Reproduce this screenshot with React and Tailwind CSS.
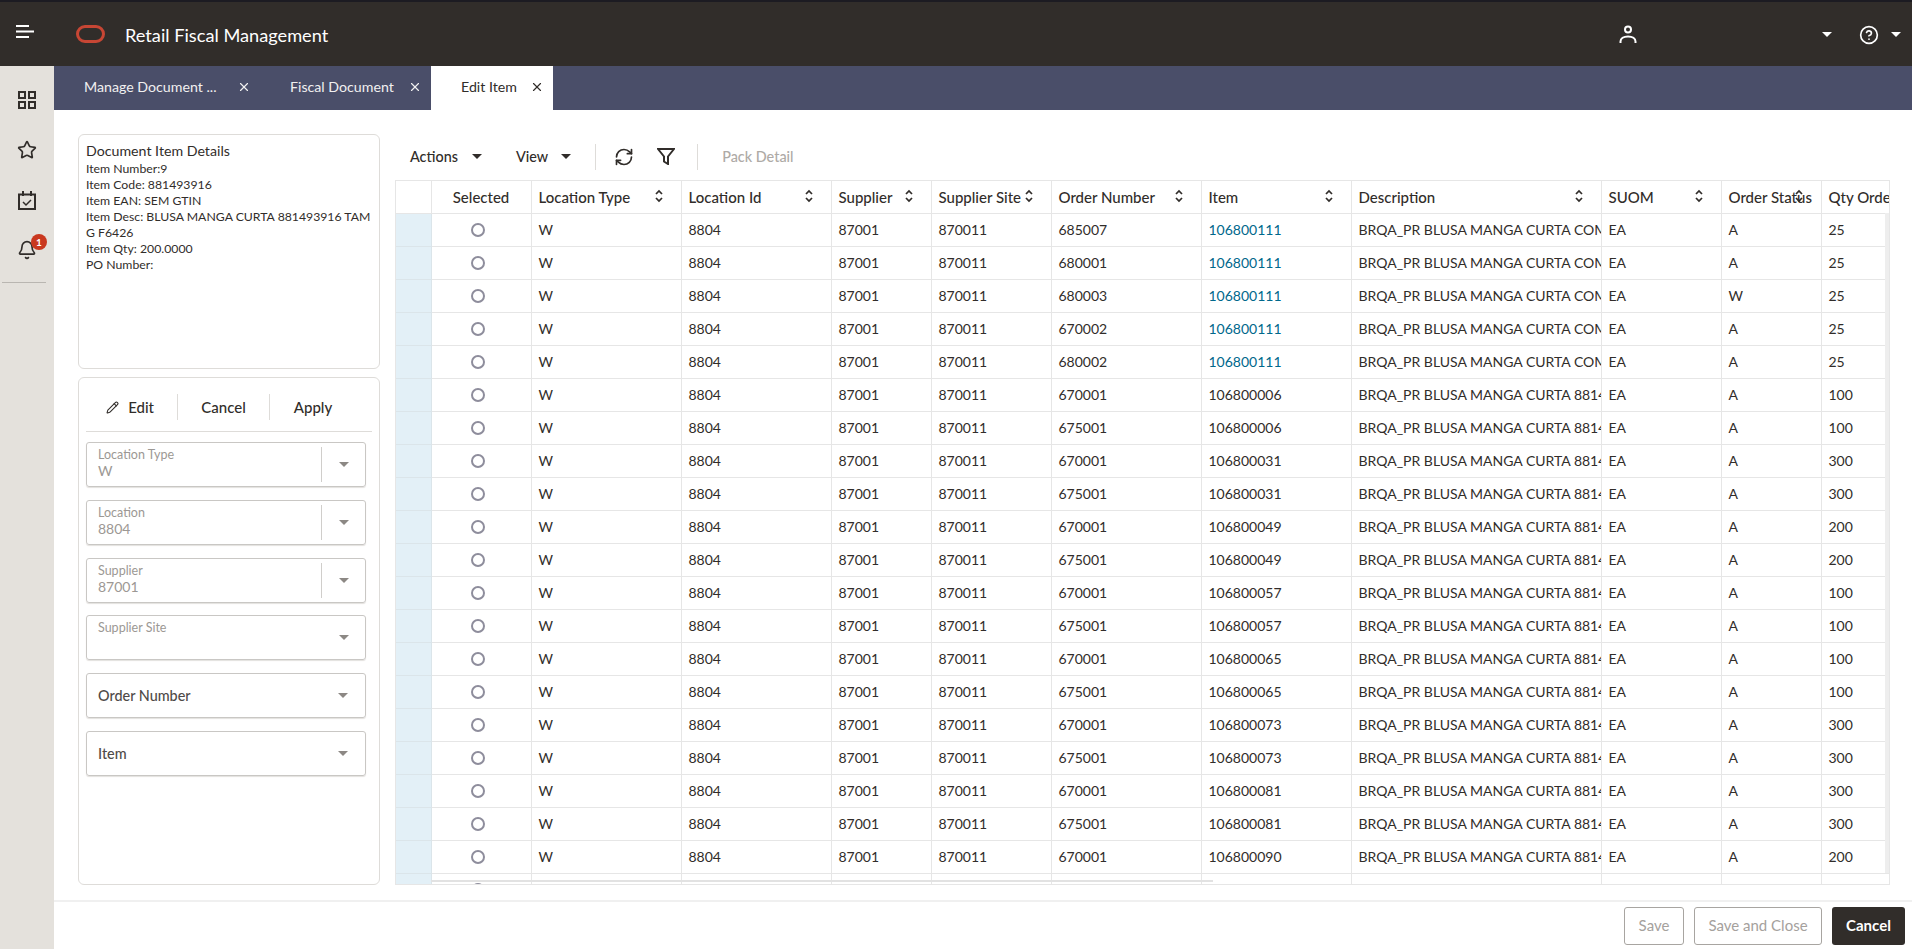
import { Pencil, X, Star, Bell, CircleHelp, RefreshCw } from 'lucide-react'

const orders = ['685007', '680001', '680003', '670002', '680002']
const items = ['106800006', '106800031', '106800049', '106800057', '106800065', '106800073', '106800081']
const itemQty = [100, 300, 200, 100, 100, 300, 300]

const rows = []
orders.forEach((order, i) => {
  rows.push({ order, item: '106800111', link: true, desc: 'BRQA_PR BLUSA MANGA CURTA COM 881493916', status: i === 2 ? 'W' : 'A', qty: 25 })
})
items.forEach((item, i) => {
  const desc = 'BRQA_PR BLUSA MANGA CURTA 881493916 TAM G'
  rows.push({ order: '670001', item, desc, status: 'A', qty: itemQty[i] })
  rows.push({ order: '675001', item, desc, status: 'A', qty: itemQty[i] })
})
rows.push({ order: '670001', item: '106800090', desc: 'BRQA_PR BLUSA MANGA CURTA 881493916 TAM G', status: 'A', qty: 200 })
rows.push({ order: '', item: '', desc: '', status: '', qty: '' })

const columns = [
  { label: 'Location Type', width: 'w-[150px]' },
  { label: 'Location Id', width: 'w-[150px]' },
  { label: 'Supplier', width: 'w-[100px]' },
  { label: 'Supplier Site', width: 'w-[120px]' },
  { label: 'Order Number', width: 'w-[150px]' },
  { label: 'Item', width: 'w-[150px]' },
  { label: 'Description', width: 'w-[250px]' },
  { label: 'SUOM', width: 'w-[120px]' },
  { label: 'Order Status', width: 'w-[100px]' },
]

function Caret({ color = 'border-t-[#312d2a]' }) {
  return <span className={`inline-block w-0 h-0 border-x-[5px] border-x-transparent border-t-[5px] ${color}`} />
}

function SortIcon() {
  return (
    <svg className="absolute right-[17px] top-[8px]" width="10" height="14" viewBox="0 0 10 14" fill="none" stroke="#312d2a" strokeWidth="1.75">
      <path d="M2 5l3-3 3 3M2 9l3 3 3-3" />
    </svg>
  )
}

function GridIcon() {
  return (
    <svg width="18" height="18" viewBox="0 0 18 18" fill="none" stroke="#312d2a" strokeWidth="2">
      <rect x="1" y="1" width="6" height="6" />
      <rect x="11" y="1" width="6" height="6" />
      <rect x="1" y="11" width="6" height="6" />
      <rect x="11" y="11" width="6" height="6" />
    </svg>
  )
}

function CalendarIcon() {
  return (
    <svg width="18" height="19" viewBox="0 0 18 19" fill="none" stroke="#312d2a" strokeWidth="2">
      <path d="M1 3.5h16v14.5h-16zM5 0v5M13 0v5" />
      <path d="M5 11l3 3 5-5" strokeWidth="1.5" />
    </svg>
  )
}

function UserIcon() {
  return (
    <svg width="18" height="20" viewBox="0 0 18 20" fill="none" stroke="white" strokeWidth="2">
      <circle cx="9" cy="4.5" r="3" />
      <path d="M1.5 18v-1.5c0-3 3-5 7.500-5s7.500 2 7.500 5v1.500" />
    </svg>
  )
}

function FunnelIcon() {
  return (
    <svg width="18" height="17" viewBox="0 0 18 17" fill="none" stroke="#312d2a" strokeWidth="2">
      <path d="M1 1h16l-6 7.500v7.500l-4-2.500v-5z" />
    </svg>
  )
}

function Field({ label, value, divider, muted = true }) {
  if (!muted) {
    return (
      <div className="h-[45px] rounded-[3px] border border-[#c9c7c4] shadow-[0_1px_1px_#e3e1de] flex items-center pl-[11px] pr-[17px] justify-between">
        <span className="text-[14.4px] text-[#4f4b48] font-medium">{label}</span>
        <Caret color="border-t-[#8c8884]" />
      </div>
    )
  }
  return (
    <div className="h-[45px] rounded-[3px] border border-[#c9c7c4] shadow-[0_1px_1px_#e3e1de] flex items-center pl-[11px]">
      <div className="flex-1 flex flex-col self-start pt-[4px]">
        <span className="text-[12.5px] leading-[16px] text-[#9c9894]">{label}</span>
        <span className="text-[14px] leading-[15px] text-[#9c9894]">{value}</span>
      </div>
      {divider && <div className="w-px h-[35px] bg-[#d0cecb]" />}
      <div className="w-[43px] flex justify-center">
        <Caret color="border-t-[#8c8884]" />
      </div>
    </div>
  )
}

function Tab({ label, active, width, pad }) {
  return (
    <div className={`h-full flex items-center pb-[3px] ${width} ${pad} ${active ? 'bg-white text-[#312d2a]' : 'text-[#f1f0f0]'}`}>
      <span className="text-[14.2px] whitespace-nowrap">{label}</span>
      <X className="ml-auto" size={14} strokeWidth={2} />
    </div>
  )
}

export default function App() {
  return (
    <div className="h-[949px] w-[1912px] overflow-hidden flex flex-col bg-white text-[#312d2a] font-['Lato','Noto_Sans',sans-serif]">
      <header className="h-[66px] shrink-0 bg-[#312d2a] border-t-2 border-[#1c1b22] flex items-center text-white">
        <svg className="ml-[16px] -mt-[6px]" width="18" height="13" viewBox="0 0 18 13" fill="white">
          <rect x="0" y="0" width="13" height="2" />
          <rect x="0" y="5.500" width="18" height="2" />
          <rect x="0" y="11" width="13" height="2" />
        </svg>
        <span className="ml-[42px] w-[29px] h-[18px] rounded-[9px] border-[3px] border-[#c74634]" />
        <span className="ml-[20px] text-[18.2px] pt-[3px]">Retail Fiscal Management</span>
        <div className="ml-auto flex items-center pt-[1px]">
          <UserIcon />
          <span className="ml-[185px] flex"><Caret color="border-t-white" /></span>
          <CircleHelp className="ml-[27px]" size={20} strokeWidth={2} />
          <span className="ml-[12px] mr-[11px] flex"><Caret color="border-t-white" /></span>
        </div>
      </header>

      <div className="flex-1 flex min-h-0">
        <aside className="w-[54px] shrink-0 bg-[#e4e1dc] flex flex-col items-center pt-[9px]">
          <div className="h-[50px] flex items-center"><GridIcon /></div>
          <div className="h-[50px] flex items-center"><Star size={20} strokeWidth={2} /></div>
          <div className="h-[50px] flex items-center"><CalendarIcon /></div>
          <div className="h-[50px] flex items-center">
            <div className="relative">
              <Bell size={20} strokeWidth={2} />
              <span className="absolute -top-[6px] left-[14px] w-[16px] h-[16px] rounded-full bg-[#c9381f] text-white text-[10px] font-bold flex items-center justify-center">1</span>
            </div>
          </div>
          <div className="mt-[7px] self-start ml-[2px] w-[44px] h-px bg-[#b9b6b1]" />
        </aside>

        <div className="flex-1 min-w-0 flex flex-col">
          <nav className="h-[44px] shrink-0 bg-[#4a4e69] flex items-center">
            <Tab label="Manage Document ..." width="w-[206px]" pad="pl-[30px] pr-[9px]" />
            <Tab label="Fiscal Document" width="w-[171px]" pad="pl-[30px] pr-[9px]" />
            <Tab label="Edit Item" active width="w-[122px]" pad="pl-[30px] pr-[9px]" />
          </nav>

          <main className="flex-1 min-h-0 flex pl-[24px] pr-[22px] pt-[24px] gap-[15px]">
            <div className="w-[302px] shrink-0 flex flex-col gap-[8px] h-[751px]">
              <section className="h-[235px] shrink-0 rounded-[6px] border border-[#dedcd9] px-[7px] pt-[6px]">
                <h2 className="text-[14.2px] leading-[20px]">Document Item Details</h2>
                <div className="text-[12.25px] leading-[16px] break-all">
                  <p>Item Number:9</p>
                  <p>Item Code: 881493916</p>
                  <p>Item EAN: SEM GTIN</p>
                  <p>Item Desc: BLUSA MANGA CURTA 881493916 TAM G F6426</p>
                  <p>Item Qty: 200.0000</p>
                  <p>PO Number:</p>
                </div>
              </section>

              <section className="flex-1 rounded-[6px] border border-[#dedcd9] px-[7px]">
                <div className="h-[54px] border-b border-[#dedcd9] flex items-center pt-[5px] text-[15px] font-medium">
                  <div className="w-[92px] flex items-center justify-end gap-[9px] pr-[23px] h-[26px] border-r border-[#dedcd9]">
                    <Pencil size={13} strokeWidth={2} />
                    <span>Edit</span>
                  </div>
                  <div className="w-[92px] flex justify-center items-center h-[26px] border-r border-[#dedcd9]">Cancel</div>
                  <div className="w-[92px] flex justify-center pr-[6px]">Apply</div>
                </div>
                <div className="flex flex-col gap-[12.8px] pt-[10px] w-[280px]">
                  <Field label="Location Type" value="W" divider />
                  <Field label="Location" value="8804" divider />
                  <Field label="Supplier" value="87001" divider />
                  <Field label="Supplier Site" value="" />
                  <Field label="Order Number" muted={false} />
                  <Field label="Item" muted={false} />
                </div>
              </section>
            </div>

            <div className="flex-1 min-w-0 flex flex-col">
              <div className="h-[46px] shrink-0 flex items-center pl-[15px] pb-[1px] text-[14.4px] font-medium">
                <span>Actions</span>
                <span className="ml-[14px] flex"><Caret /></span>
                <span className="ml-[34px]">View</span>
                <span className="ml-[13px] flex"><Caret /></span>
                <div className="ml-[24px] w-px h-[26px] bg-[#dedcd9]" />
                <RefreshCw className="ml-[18px]" size={20} strokeWidth={2} />
                <span className="ml-[23px] flex"><FunnelIcon /></span>
                <div className="ml-[22px] w-px h-[26px] bg-[#dedcd9]" />
                <span className="ml-[24px] text-[#aeaaa6]">Pack Detail</span>
              </div>

              <div className="relative h-[705px] w-[1495px] overflow-hidden border border-[#e6e6e6]">
                <table className="table-fixed border-collapse w-[1530px] text-[14px]">
                  <colgroup>
                    <col className="w-[35px]" />
                    <col className="w-[100px]" />
                    {columns.map((c) => <col key={c.label} className={c.width} />)}
                    <col className="w-[105px]" />
                  </colgroup>
                  <thead>
                    <tr className="h-[32px] text-[15px]">
                      <th className="border-r border-b border-[#e6e6e6]" />
                      <th className="border-r border-b border-[#e6e6e6] font-medium text-center">Selected</th>
                      {columns.map((c) => (
                        <th key={c.label} className="relative border-r border-b border-[#e6e6e6] font-medium text-left pl-[7px] whitespace-nowrap overflow-hidden">
                          {c.label}
                          <SortIcon />
                        </th>
                      ))}
                      <th className="border-b border-[#e6e6e6] font-medium text-left pl-[7px] whitespace-nowrap overflow-hidden">Qty Ordered</th>
                    </tr>
                  </thead>
                  <tbody>
                    {rows.map((r, i) => (
                      <tr key={i} className="h-[33px]">
                        <td className="bg-[#e3f0f7] border-r border-b border-[#dbe5ea]" />
                        <td className="border-r border-b border-[#e6e6e6]">
                          <div className="w-[14px] h-[14px] mx-auto -translate-x-[3px] rounded-full border-2 border-[#8e8d9c]" />
                        </td>
                        <td className="border-r border-b border-[#e6e6e6] pl-[7px]">W</td>
                        <td className="border-r border-b border-[#e6e6e6] pl-[7px]">8804</td>
                        <td className="border-r border-b border-[#e6e6e6] pl-[7px]">87001</td>
                        <td className="border-r border-b border-[#e6e6e6] pl-[7px]">870011</td>
                        <td className="border-r border-b border-[#e6e6e6] pl-[7px]">{r.order}</td>
                        <td className={`border-r border-b border-[#e6e6e6] pl-[7px] ${r.link ? 'text-[#00688c]' : ''}`}>{r.item}</td>
                        <td className="border-r border-b border-[#e6e6e6] pl-[7px] whitespace-nowrap overflow-hidden">{r.desc}</td>
                        <td className="border-r border-b border-[#e6e6e6] pl-[7px]">EA</td>
                        <td className="border-r border-b border-[#e6e6e6] pl-[7px]">{r.status}</td>
                        <td className="border-b border-[#e6e6e6] pl-[7px]">{r.qty}</td>
                      </tr>
                    ))}
                  </tbody>
                </table>
                <div className="absolute left-[35px] bottom-[2px] w-[782px] h-[2px] bg-[#e2e2e2]" />
                <div className="absolute right-0 top-[32px] w-[4px] h-[660px] bg-[#eeeeee]" />
              </div>
            </div>
          </main>

          <footer className="h-[49px] shrink-0 border-t-[2px] border-[#f0f0f0] flex items-center justify-end gap-[10px] pr-[7px] text-[15px]">
            <button className="h-[38px] w-[60px] rounded-[3px] border border-[#a8a5a1] text-[#a5a19d]">Save</button>
            <button className="h-[38px] w-[128px] rounded-[3px] border border-[#a8a5a1] text-[#a5a19d]">Save and Close</button>
            <button className="h-[38px] w-[73px] rounded-[3px] bg-[#312d2a] text-white font-bold">Cancel</button>
          </footer>
        </div>
      </div>
    </div>
  )
}
